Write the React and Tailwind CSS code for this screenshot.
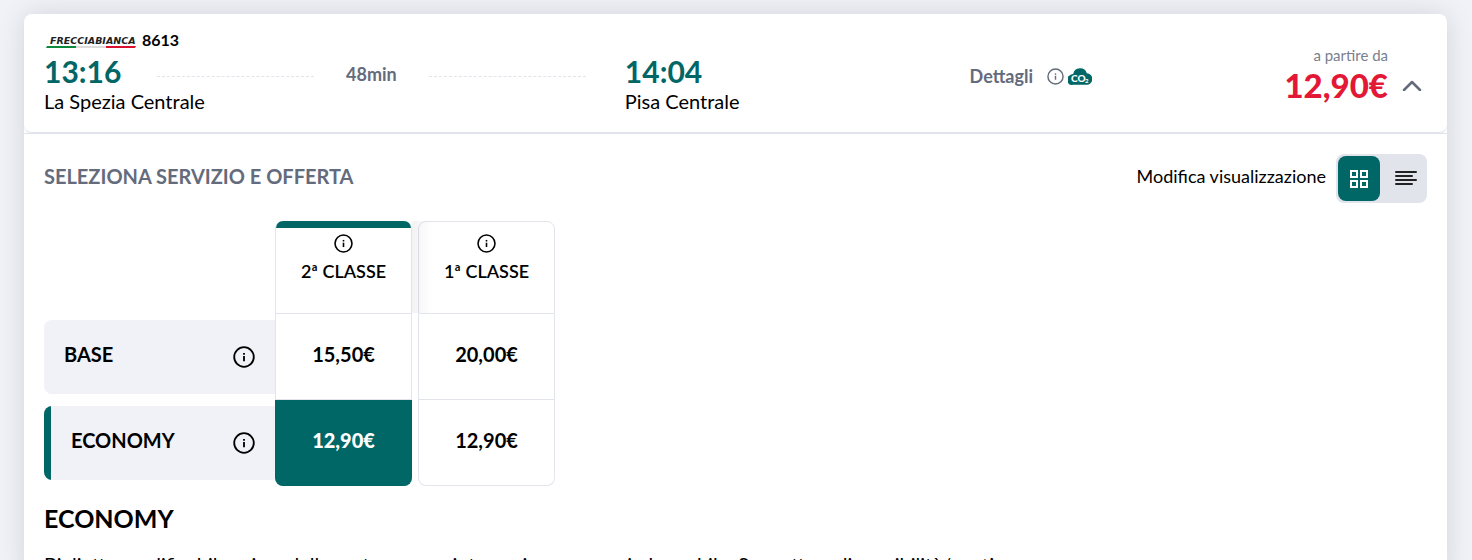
import React, { useState } from 'react';

const services = [
  { id: 'second', label: '2ª CLASSE' },
  { id: 'first', label: '1ª CLASSE' },
];

const offers = [
  { id: 'base', label: 'BASE', prices: { second: '15,50€', first: '20,00€' } },
  { id: 'economy', label: 'ECONOMY', prices: { second: '12,90€', first: '12,90€' } },
];

const descriptions = {
  base: 'Biglietto modificabile e rimborsabile prima della partenza.',
  economy:
    'Biglietto modificabile prima della partenza con integrazione e non rimborsabile. Soggetto a disponibilità/posti.',
};

function InfoIcon({ className }) {
  return (
    <svg viewBox="0 0 24 24" className={className} fill="none" stroke="currentColor" aria-hidden="true">
      <circle cx="12" cy="12" r="10.7" strokeWidth="2" />
      <path d="M12 11v5.500" strokeWidth="2" />
      <path d="M12 7.500v2" strokeWidth="2" />
    </svg>
  );
}

function FrecciabiancaLogo() {
  return (
    <svg viewBox="0 0 90 16" className="h-4 w-[90px]" role="img" aria-label="Frecciabianca">
      <text
        x="4"
        y="12"
        fill="#222222"
        fontFamily="DejaVu Sans, sans-serif"
        fontSize="9.500"
        fontWeight="700"
        fontStyle="italic"
      >
        FRECCIABIANCA
      </text>
      <path d="M1 14h29v2H0z" fill="#0b8a3c" />
      <path d="M30 14h30v2H30z" fill="#dcdcdc" />
      <path d="M60 14h30l-1 2H60z" fill="#d9112f" />
    </svg>
  );
}

function Co2Icon() {
  return (
    <svg viewBox="0 0 24 18" className="h-[18px] w-6" aria-hidden="true">
      <path
        d="M5 17.700A4.900 4.900 0 0 1 1.600 8.600A4.500 4.500 0 0 1 5.200 6.900A7 7 0 0 1 18.800 6.300A5.700 5.700 0 0 1 18.500 17.700Z"
        fill="#006666"
      />
      <text x="3" y="15" fill="#ffffff" fontFamily="Lato, sans-serif" fontSize="10" fontWeight="900">
        CO
      </text>
      <text x="17" y="16" fill="#ffffff" fontFamily="Lato, sans-serif" fontSize="6" fontWeight="900">
        2
      </text>
    </svg>
  );
}

function App() {
  const [expanded, setExpanded] = useState(true);
  const [view, setView] = useState('grid');
  const [selected, setSelected] = useState({ service: 'second', offer: 'economy' });

  const currentOffer = offers.find((offer) => offer.id === selected.offer);

  return (
    <div className="min-h-screen bg-[#f1f2f7] pt-3.5 pr-[25px] pl-6 font-['Lato',sans-serif] text-black">
      <div className="rounded-t-lg bg-white shadow-[0_0_28px_rgba(0,0,0,0.12)]">
        {/* Journey summary */}
        <div className="flex h-[119px] rounded-lg border-b border-[#e2e4eb] px-5 pt-4 shadow-[0_1px_1px_rgba(0,0,0,0.08)]">
          <div className="w-[42%]">
            <div className="flex h-5 items-center gap-1.5 pl-0.5">
              <FrecciabiancaLogo />
              <span className="text-base font-bold">8613</span>
            </div>
            <div className="flex h-[43px] items-center">
              <div className="w-[113px] text-[30px] font-bold text-[#006666]">13:16</div>
              <div className="mt-2.5 w-[157px] border-t border-dashed border-[#e2e4eb]" />
              <div className="mt-1 flex-1 text-center text-lg font-bold text-[#646b7c]">48min</div>
              <div className="mt-2.5 mr-[39px] w-[157px] border-t border-dashed border-[#e2e4eb]" />
            </div>
            <div className="text-xl leading-4">La Spezia Centrale</div>
          </div>

          <div className="flex-1 pt-5">
            <div className="flex h-[43px] items-center text-[30px] font-bold text-[#006666]">14:04</div>
            <div className="text-xl leading-4">Pisa Centrale</div>
          </div>

          <div className="mt-8 flex h-7 items-center text-[#646b7c]">
            <button type="button" className="mr-3.5 text-lg font-bold">
              Dettagli
            </button>
            <InfoIcon className="mr-1 size-[17px]" />
            <Co2Icon />
          </div>

          <div className="flex w-[335px] items-center justify-end gap-3.5 pb-3">
            <div className="text-right">
              <div className="text-[15px] leading-5 text-[#79808f]">a partire da</div>
              <div className="text-[33px] leading-10 font-black text-[#e31837]">12,90€</div>
            </div>
            <button
              type="button"
              aria-label="Mostra offerte"
              aria-expanded={expanded}
              onClick={() => setExpanded(!expanded)}
              className="mt-5 mr-[5px] text-[#646b7c]"
            >
              <svg viewBox="0 0 20 12" className="h-3 w-5" fill="none" stroke="currentColor" strokeWidth="2.500">
                <path d="M2 11l8-8 8 8" strokeLinecap="round" strokeLinejoin="round" />
              </svg>
            </button>
          </div>
        </div>

        {expanded && (
          <div className="border-t border-[#e2e4eb] px-5 pt-5">
            <div className="flex items-center justify-between">
              <h2 className="pb-1.5 text-xl font-bold text-[#646b7c]">SELEZIONA SERVIZIO E OFFERTA</h2>
              <div className="flex items-center gap-2.5">
                <span className="pb-1.5 text-lg">Modifica visualizzazione</span>
                <div className="flex rounded-lg bg-[#e2e4ec] p-0.5">
                  <button
                    type="button"
                    aria-label="Griglia"
                    aria-pressed={view === 'grid'}
                    onClick={() => setView('grid')}
                    className="flex h-[45px] w-[42px] items-center justify-center rounded-lg bg-[#006666] text-white"
                  >
                    <svg viewBox="0 0 18 18" className="size-[18px]" fill="none" stroke="currentColor" strokeWidth="2">
                      <path d="M1 1h6v6h-6zM11 1h6v6h-6zM1 11h6v6h-6zM11 11h6v6h-6z" />
                    </svg>
                  </button>
                  <button
                    type="button"
                    aria-label="Elenco"
                    aria-pressed={view === 'list'}
                    onClick={() => setView('list')}
                    className="flex h-[45px] w-[45px] items-center justify-center pl-1.5"
                  >
                    <svg viewBox="0 0 22 18" className="h-[18px] w-[22px]" fill="none" stroke="#222222" strokeWidth="2">
                      <path d="M1 2h20M1 6h16M1 10h20M1 14h16" strokeLinecap="round" />
                    </svg>
                  </button>
                </div>
              </div>
            </div>

            <div className="mt-[18px] flex">
              <div className="w-[231px] space-y-3 pt-[99px]">
                {offers.map((offer) => (
                  <div
                    key={offer.id}
                    className={`flex h-[74px] items-center justify-between overflow-hidden rounded-l-lg bg-[#f1f2f7] text-xl font-bold ${
                      selected.offer === offer.id ? '' : 'pl-5'
                    }`}
                  >
                    {selected.offer === offer.id && <div className="mr-5 h-full w-[7px] bg-[#006666]" />}
                    <span className="flex-1 pb-1.5">{offer.label}</span>
                    <button type="button" aria-label={`Informazioni ${offer.label}`} className="mr-5">
                      <InfoIcon className="size-[22px]" />
                    </button>
                  </div>
                ))}
              </div>

              <div className="flex gap-1.5">
                {services.map((service) => {
                  const active = selected.service === service.id;
                  return (
                    <div key={service.id} className="w-[137px]">
                      <div
                        className={`relative flex h-[93px] flex-col items-center rounded-t-lg border border-[#e2e4eb] bg-white ${
                          active ? 'z-10 border-t-0' : ''
                        }`}
                      >
                        {active ? (
                          <div className="h-[7px] w-full rounded-t-lg bg-[#006666]" />
                        ) : (
                          <div className="h-1.5 w-full" />
                        )}
                        <InfoIcon className="mt-1.5 size-[19px]" />
                        <span className="mt-1 text-lg font-semibold">{service.label}</span>
                        {active && (
                          <div className="absolute top-0 left-full ml-px h-full w-5 bg-linear-to-r from-black/5 to-transparent" />
                        )}
                      </div>
                      {offers.map((offer) => (
                        <button
                          key={offer.id}
                          type="button"
                          onClick={() => setSelected({ service: service.id, offer: offer.id })}
                          className={`block h-[86px] w-full border-x border-b pb-1.5 text-xl last:rounded-b-lg ${
                            active && selected.offer === offer.id
                              ? 'border-[#006666] bg-[#006666] font-black text-white'
                              : 'border-[#e2e4eb] font-bold'
                          }`}
                        >
                          {offer.prices[service.id]}
                        </button>
                      ))}
                    </div>
                  );
                })}
              </div>
            </div>

            <h3 className="mt-3.5 text-[25px] leading-9 font-bold">{currentOffer.label}</h3>
            <p className="mt-3.5 text-xl">{descriptions[currentOffer.id]}</p>
          </div>
        )}
      </div>
    </div>
  );
}

export default App;
